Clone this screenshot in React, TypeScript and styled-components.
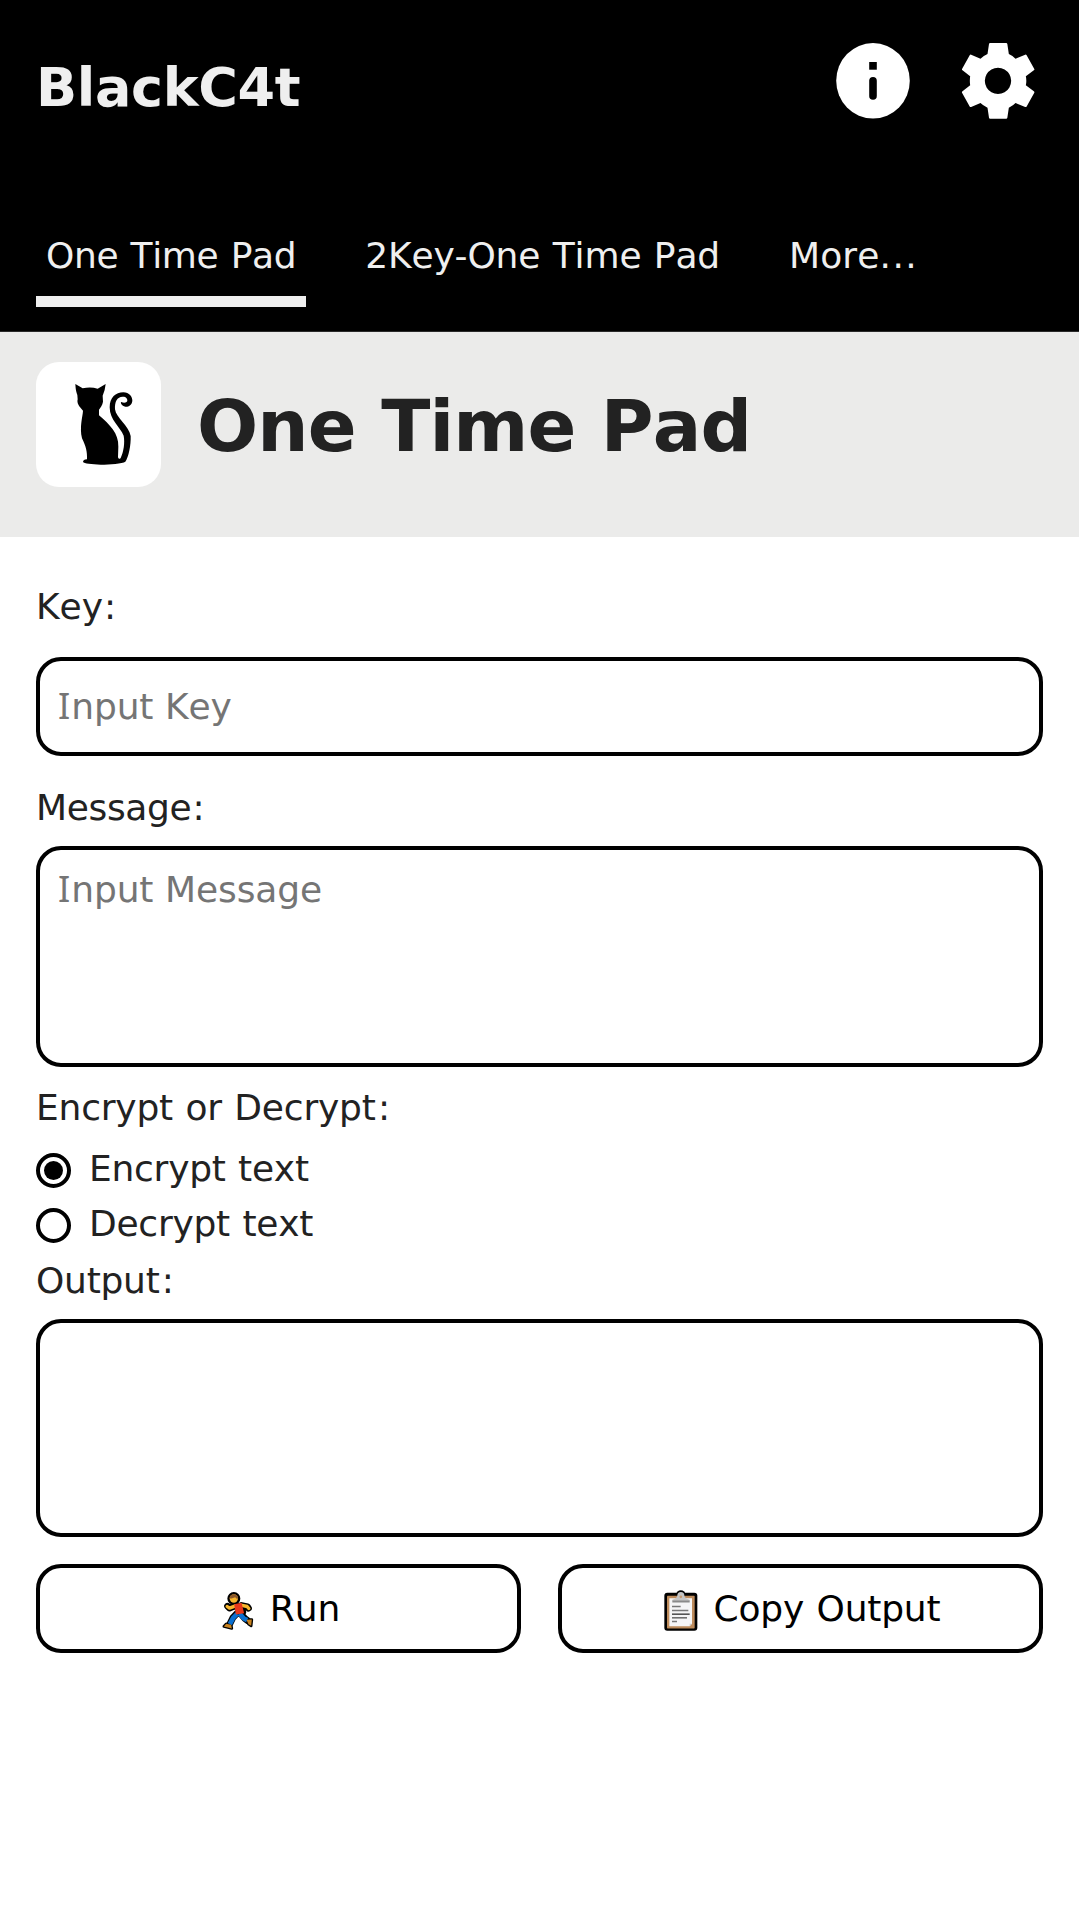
import React, { useState } from "react";
import styled, { createGlobalStyle } from "styled-components";

const Global = createGlobalStyle`
  *, *::before, *::after { box-sizing: border-box; }
  html, body { margin: 0; background: #fff; }
  body {
    min-height: 1919px;
    color: #222;
    font: 36px/44px "DejaVu Sans", Verdana, sans-serif;
    font-kerning: none;
    word-spacing: 1.2px;
  }
`;

const Header = styled.header`
  height: 332px;
  padding: 43px 44px 0 36px;
  background: #000;
  color: #efefef;
  border-bottom: 1px solid #2a2a2a;
  display: flex;
  flex-direction: column;
  justify-content: space-between;
`;

const TitleBar = styled.div`
  display: flex;
  align-items: flex-start;
  justify-content: space-between;
`;

const Brand = styled.h1`
  margin: 15px 0 0;
  font-size: 54px;
  line-height: 60px;
  letter-spacing: -0.35px;
`;

const Actions = styled.div`
  display: flex;
  gap: 51px;
`;

const IconButton = styled.button`
  display: flex;
  padding: 0;
  border: 0;
  background: none;
  color: #fff;
  cursor: pointer;
`;

const Tabs = styled.nav`
  display: flex;
  gap: 49px;
  margin-bottom: 24px;
`;

const Tab = styled.a<{ $active?: boolean; $track: number }>`
  padding: 0 10px 18px;
  letter-spacing: ${(p) => p.$track}px;
  white-space: nowrap;
  border-bottom: 11px solid ${(p) => (p.$active ? "#efefef" : "transparent")};
  cursor: pointer;
`;

const Dots = styled.span`
  letter-spacing: 1.5px;
`;

const Hero = styled.section`
  display: flex;
  align-items: flex-start;
  gap: 36px;
  height: 205px;
  padding: 30px 36px 0;
  background: #ebebea;
`;

const LogoTile = styled.div`
  width: 125px;
  height: 125px;
  border-radius: 23px;
  background: #fff;
`;

const PageTitle = styled.h2`
  margin: 22px 0 0;
  font-size: 72px;
  line-height: 84px;
  letter-spacing: -0.85px;
`;

const Form = styled.form`
  display: flex;
  flex-direction: column;
  padding: 48px 36px 0;
`;

const Caption = styled.label<{ $before?: number; $after?: number; $track?: number }>`
  height: 44px;
  margin: ${(p) => p.$before ?? 0}px 0 ${(p) => p.$after ?? 0}px;
  letter-spacing: ${(p) => p.$track ?? 0}px;
`;

const Colon = styled.span<{ $space: number }>`
  margin-left: ${(p) => p.$space}px;
`;

const Field = styled.div<{ $height: number; $top?: number }>`
  position: relative;
  height: ${(p) => p.$height}px;
  padding: ${(p) => p.$top ?? 0}px 18px 0;
  border: 4px solid #000;
  border-radius: 25px;
`;

const Hint = styled.span`
  color: #757575;
  letter-spacing: -0.13px;
  word-spacing: 0.5px;
`;

const SerifCap = styled.span`
  font-family: "Noto Sans", sans-serif;
  line-height: 1;
  letter-spacing: 1px;
`;

const Entry = styled.textarea`
  position: absolute;
  inset: 0;
  width: 100%;
  height: 100%;
  padding: 24px 18px;
  border: 0;
  outline: 0;
  resize: none;
  overflow: hidden;
  background: transparent;
  color: #222;
  font: inherit;
`;

const Choice = styled.label`
  display: flex;
  align-items: center;
  gap: 18px;
  height: 44px;
  letter-spacing: -0.25px;
  cursor: pointer;
`;

const Choices = styled.div`
  display: flex;
  flex-direction: column;
  gap: 11px;
`;

const Radio = styled.input`
  appearance: none;
  display: grid;
  place-items: center;
  width: 35px;
  height: 35px;
  margin: 2px 0 0;
  border: 4px solid #000;
  border-radius: 50%;
  &:checked::before {
    content: "";
    width: 19px;
    height: 19px;
    border-radius: 50%;
    background: #000;
  }
`;

const Buttons = styled.div`
  display: grid;
  grid-template-columns: 1fr 1fr;
  gap: 37px;
  margin-top: 27px;
`;

const Button = styled.button<{ $track?: number }>`
  display: flex;
  align-items: center;
  justify-content: center;
  gap: 9px;
  height: 89px;
  padding: 1px 0 0;
  border: 4px solid #000;
  border-radius: 25px;
  background: #fff;
  color: #000;
  font: inherit;
  letter-spacing: ${(p) => p.$track ?? 0}px;
  word-spacing: 1.2px;
  cursor: pointer;
`;

const InfoIcon = () => (
  <svg width="74" height="76" viewBox="0 0 74 76">
    <ellipse cx="37" cy="37.8" rx="36.8" ry="37.8" fill="currentColor" />
    <rect x="33.2" y="19" width="7.6" height="7.7" />
    <rect x="33.2" y="34" width="7.6" height="22.8" rx="3.8" />
  </svg>
);

const GearIcon = () => (
  <svg width="74" height="76" viewBox="49.5 39 222 228">
    <path
      fill="currentColor"
      fillRule="evenodd"
      d="M137 39H185Q188 39 188.500 42L193 72Q206 78 213 86L242 74Q245 73 246 75L269 116Q271 119 268 121L244 139Q247 152 244 166L268 184Q271 186 269 189L246 230Q245 232 242 231L213 219Q206 227 193 233L188.500 263Q188 266 185 266H137Q134 266 133.500 263L129 233Q116 227 108 219L80 231Q77 232 76 230L53 189Q51 186 54 184L77 166Q75 152 77 139L54 121Q51 119 53 116L76 75Q77 73 80 74L108 86Q116 78 129 72L133.500 42Q134 39 137 39ZM160.500 113a39.500 39.500 0 1 0 .01 0Z"
    />
  </svg>
);

const CatLogo = () => (
  <svg width="125" height="125" viewBox="-72 -24 375 375">
    <path d="M46 42L68 55Q92 50 113 56L137 42Q135 63 128 77L129 95C127 106 122 111 117 119V136C150 165 176 190 175 230L174 262Q177 270 182 264C191 245 195 218 191 197C180 170 149 150 149 112C149 83 167 67 190 67C208 67 217 81 217 92C216 105 205 111 196 110C185 108 180 98 184 96C192 100 203 98 202 90C200 81 194 80 188 80C171 80 164 95 165 118C168 143 207 168 212 198C213 225 206 262 196 275C187 281 150 284 122 284C95 283 72 281 69 276Q69 269 81 268C82 245 78 230 66 205C58 170 68 140 69 122C57 109 50 100 53 88L52 75C47 60 47 55 46 42Z" />
  </svg>
);

const RunnerIcon = () => (
  <svg width="44" height="44" viewBox="52.5 109.5 132 132" strokeLinejoin="round" strokeLinecap="round" fill="none">
    <g stroke="#000">
      <circle cx="103" cy="144" r="15" strokeWidth="9" fill="#000" />
      <path strokeWidth="20" d="M106 166L90 173L84 167M126 165L144 169L147 173M108 168L124 166L130 184L112 189L100 202L92 218M124 190L136 204L144 210" />
      <path strokeWidth="8" fill="#000" d="M80 220L95 223L97 234L73 228ZM141 208L157 207L155 226L147 221Z" />
    </g>
    <path stroke="#f8b62d" strokeWidth="10" d="M108 166L90 173L83 168M124 164L143 168L148 174" />
    <path stroke="#0a6fd0" strokeWidth="14" strokeLinecap="butt" d="M113 190L101 202L91 221M120 189L133 204L143 209" />
    <path fill="#e8381b" d="M104 161L126 157L134 188L109 192Z" />
    <path fill="#c8821e" d="M80 220L95 223L97 234L73 228ZM141 208L157 207L155 226L147 221Z" />
    <circle cx="103" cy="144" r="12.500" fill="#f8b62d" />
    <path fill="#8b572a" d="M90 144A13 13 0 0 1 116 144L112 145L107 140L96 144Z" />
  </svg>
);

const ClipboardIcon = () => (
  <svg width="44" height="44" viewBox="18 19.5 132 132">
    <rect x="28" y="37" width="99" height="114" rx="9" />
    <circle cx="77.500" cy="43" r="14" />
    <rect x="36" y="46" width="83" height="98" rx="2" fill="#bd8b5b" />
    <path fill="#f5f5f6" d="M43 53H111V130L104 137H43Z" />
    <path fill="#ccc" d="M104 137V130H111Z" />
    <path fill="#c5c5c5" d="M52 58Q66 54 67 45A10.500 10.500 0 0 1 88 45Q89 54 104 58V62H52Z" />
    <path fill="#8a8a8a" d="M52 60H104V66H52Z" />
    <circle cx="77.500" cy="49" r="4" fill="#c79b72" />
    <g strokeWidth="4" fill="none">
      <path stroke="#777" d="M51 78H77M51 90H100M51 123H66" />
      <path stroke="#333" d="M51 101H104" />
      <path stroke="#555" d="M51 112H96" />
    </g>
  </svg>
);

export default function App() {
  const [key, setKey] = useState("");
  const [message, setMessage] = useState("");
  const [mode, setMode] = useState("encrypt");

  return (
    <>
      <Global />
      <Header>
        <TitleBar>
          <Brand>BlackC4t</Brand>
          <Actions>
            <IconButton aria-label="Info"><InfoIcon /></IconButton>
            <IconButton aria-label="Settings"><GearIcon /></IconButton>
          </Actions>
        </TitleBar>
        <Tabs>
          <Tab $active $track={-0.35}>One Time Pad</Tab>
          <Tab $track={-0.15}>2Key-One Time Pad</Tab>
          <Tab $track={0.1}>More<Dots>...</Dots></Tab>
        </Tabs>
      </Header>
      <Hero>
        <LogoTile><CatLogo /></LogoTile>
        <PageTitle>One Time Pad</PageTitle>
      </Hero>
      <Form onSubmit={(e) => e.preventDefault()}>
        <Caption $after={28}>Key<Colon $space={1}>:</Colon></Caption>
        <Field $height={99} $top={24}>
          {!key && <Hint><SerifCap>I</SerifCap>nput Key</Hint>}
          <Entry rows={1} value={key} onChange={(e) => setKey(e.target.value)} />
        </Field>
        <Caption $before={30} $after={16} $track={-0.35}>Message<Colon $space={1.2}>:</Colon></Caption>
        <Field $height={221} $top={18}>
          {!message && <Hint><SerifCap>I</SerifCap>nput Message</Hint>}
          <Entry value={message} onChange={(e) => setMessage(e.target.value)} />
        </Field>
        <Caption $before={19} $after={17} $track={-0.2}>Encrypt or Decrypt<Colon $space={2.2}>:</Colon></Caption>
        <Choices>
          <Choice>
            <Radio type="radio" name="mode" checked={mode === "encrypt"} onChange={() => setMode("encrypt")} />
            Encrypt text
          </Choice>
          <Choice>
            <Radio type="radio" name="mode" checked={mode === "decrypt"} onChange={() => setMode("decrypt")} />
            Decrypt text
          </Choice>
        </Choices>
        <Caption $before={13} $after={16} $track={-0.25}>Output<Colon $space={2.2}>:</Colon></Caption>
        <Field $height={218} />
        <Buttons>
          <Button type="submit"><RunnerIcon />Run</Button>
          <Button type="button" $track={-0.2}><ClipboardIcon />Copy Output</Button>
        </Buttons>
      </Form>
    </>
  );
}
